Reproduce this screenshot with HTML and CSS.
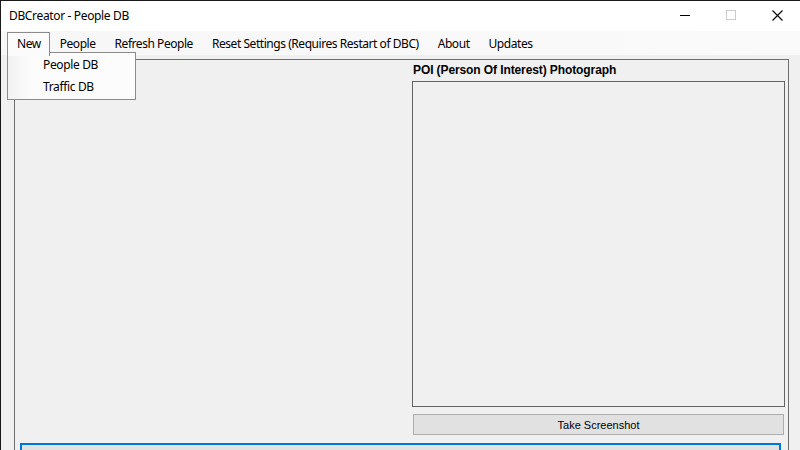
FILE: index.html
```html
<!DOCTYPE html>
<html>
<head>
<meta charset="utf-8">
<link rel="stylesheet" href="styles.css">
</head>
<body>
<div class="window">
  <div class="titlebar">
    <div class="title">DBCreator - People DB</div>
    <div class="controls">
      <div class="ctl"><svg width="10" height="10" viewBox="0 0 10 10"><line x1="0" y1="5.5" x2="10" y2="5.5" stroke="#000" stroke-width="1"/></svg></div>
      <div class="ctl"><svg width="10" height="10" viewBox="0 0 10 10"><rect x="0.5" y="0.5" width="9" height="9" fill="none" stroke="#cccccc" stroke-width="1"/></svg></div>
      <div class="ctl"><svg width="11" height="11" viewBox="0 0 11 11"><path d="M0.5 0.5 L10.5 10.5 M10.5 0.5 L0.5 10.5" stroke="#000" stroke-width="1.1" fill="none"/></svg></div>
    </div>
  </div>
  <div class="menubar">
    <div class="mi open">New</div>
    <div class="mi">People</div>
    <div class="mi">Refresh People</div>
    <div class="mi">Reset Settings (Requires Restart of DBC)</div>
    <div class="mi">About</div>
    <div class="mi">Updates</div>
    <div class="dropdown">
      <div class="dd-item">People DB</div>
      <div class="dd-item">Traffic DB</div>
    </div>
  </div>
  <div class="content">
    <div class="group">
      <div class="top-row">
        <div class="left-pane"></div>
        <div class="right-pane">
          <div class="poi-label">POI (Person Of Interest) Photograph</div>
          <div class="picture"></div>
          <div class="btn">Take Screenshot</div>
        </div>
      </div>
      <div class="big-btn"></div>
    </div>
  </div>
</div>
</body>
</html>
```
FILE: styles.css
```css
html, body {
  margin: 0;
  padding: 0;
  width: 800px;
  height: 450px;
  overflow: hidden;
  background: #f0f0f0;
}
.window {
  width: 799px;
  height: 449px;
  border-left: 1px solid #1a1a1a;
  border-top: 1px solid #1a1a1a;
  display: flex;
  flex-direction: column;
  font-family: "Noto Sans", sans-serif;
  position: relative;
  overflow: hidden;
}
.titlebar {
  height: 30px;
  background: #ffffff;
  display: flex;
  align-items: center;
  justify-content: space-between;
  flex-shrink: 0;
}
.title {
  font-size: 12px;
  color: #000;
  padding-left: 8px;
  letter-spacing: -0.35px;
  margin-top: -1px;
}
.controls {
  display: flex;
  height: 30px;
}
.ctl {
  width: 46px;
  height: 30px;
  display: flex;
  align-items: center;
  justify-content: center;
  margin-top: -1px;
}
.menubar {
  height: 24px;
  background: linear-gradient(to right, #f7f7f7, #fafafa);
  display: flex;
  align-items: stretch;
  padding-left: 6px;
  padding-top: 2px;
  box-sizing: border-box;
  position: relative;
  flex-shrink: 0;
  font-size: 12px;
  letter-spacing: -0.45px;
}
.mi {
  padding: 0 8px 3px 9px;
  display: flex;
  align-items: center;
  color: #000;
  border: 1px solid transparent;
  border-bottom: none;
  box-sizing: border-box;
}
.mi.open {
  background: #fbfbfb;
  border-color: #8c8c8c;
  position: relative;
  z-index: 3;
  height: 24px;
  margin-top: -1px;
  padding-bottom: 2px;
}
.dropdown {
  position: absolute;
  left: 6px;
  top: 21px;
  width: 129px;
  height: 48px;
  background: linear-gradient(to right, #f1f1f1 0px, #fcfcfc 23px, #fcfcfc 24px);
  border: 1px solid #8c8c8c;
  z-index: 2;
  padding-top: 0px;
  box-sizing: border-box;
  letter-spacing: -0.35px;
}
.dd-item {
  height: 22px;
  display: flex;
  align-items: center;
  padding-left: 35px;
  font-size: 12px;
}
.content {
  flex: 1;
  background: #f0f0f0;
  padding: 4px 11px 0 13px;
  display: flex;
}
.group {
  flex: 1;
  border: 1px solid #6e6e6e;
  border-bottom: none;
  padding: 3px 3px 0 5px;
  display: flex;
  flex-direction: column;
}
.top-row {
  display: flex;
}
.left-pane {
  flex: 1;
}
.right-pane {
  width: 373px;
  display: flex;
  flex-direction: column;
}
.poi-label {
  font-family: "Liberation Sans", Arial, sans-serif;
  font-weight: bold;
  font-size: 12px;
  height: 18px;
  line-height: 14px;
  padding-left: 1px;
  color: #000;
  letter-spacing: -0.1px;
}
.picture {
  height: 326px;
  box-sizing: border-box;
  border: 1px solid #646464;
  background: #f0f0f0;
}
.btn {
  margin: 7px 1px 0 1px;
  height: 21px;
  box-sizing: border-box;
  border: 1px solid #adadad;
  background: #e1e1e1;
  font-family: "Liberation Sans", Arial, sans-serif;
  font-size: 11px;
  display: flex;
  align-items: center;
  justify-content: center;
  color: #000;
}
.big-btn {
  margin: 8px 4px 0 0;
  height: 30px;
  box-sizing: border-box;
  border: 2px solid #0078d7;
  border-bottom: none;
  background: #e1e1e1;
}
```
